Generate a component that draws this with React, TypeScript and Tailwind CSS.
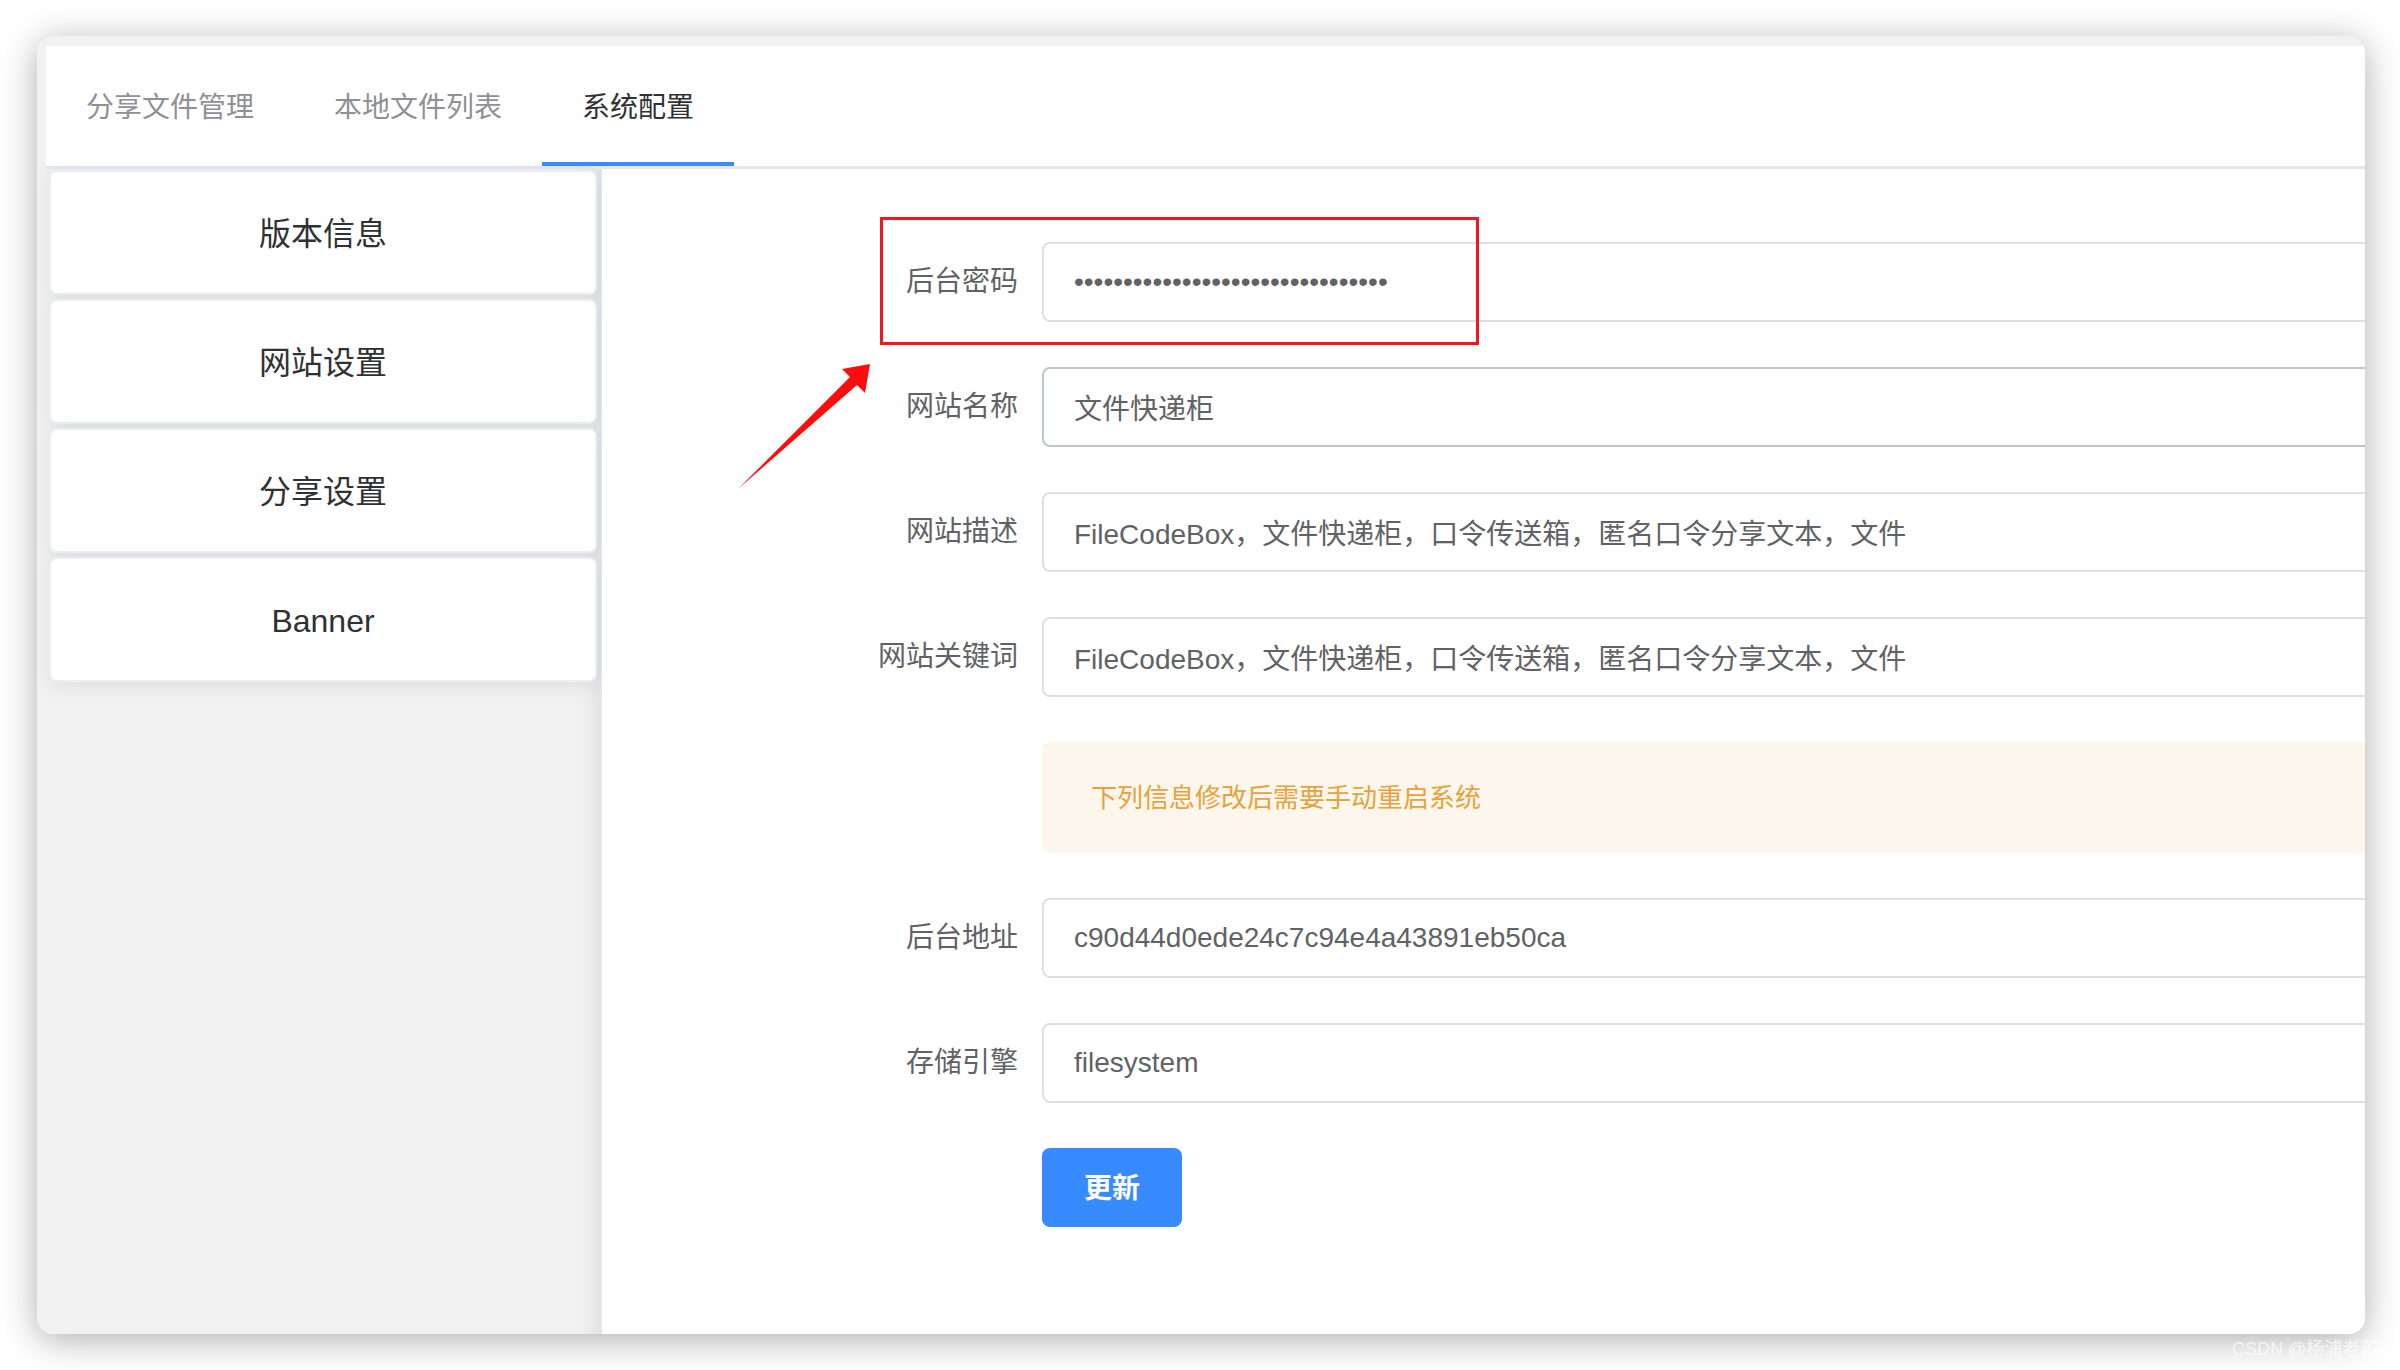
import React from 'react';

const tabs = ['分享文件管理', '本地文件列表', '系统配置'];
const menu = ['版本信息', '网站设置', '分享设置', 'Banner'];

const fields = [
  { label: '后台密码', value: '••••••••••••••••••••••••••••••••' },
  { label: '网站名称', value: '文件快递柜', hover: true },
  { label: '网站描述', value: 'FileCodeBox，文件快递柜，口令传送箱，匿名口令分享文本，文件' },
  { label: '网站关键词', value: 'FileCodeBox，文件快递柜，口令传送箱，匿名口令分享文本，文件' },
];

const restartFields = [
  { label: '后台地址', value: 'c90d44d0ede24c7c94e4a43891eb50ca' },
  { label: '存储引擎', value: 'filesystem' },
];

const Field = ({ label, value, hover }: { label: string; value: string; hover?: boolean }) => (
  <div className="flex items-center h-[80px]">
    <label className="w-[188px] shrink-0 pr-[24px] text-right text-[28px] text-[#606266]">{label}</label>
    <input
      readOnly
      value={value}
      className={`w-[1500px] shrink-0 h-[80px] rounded-[8px] border-2 bg-white px-[30px] text-[28px] text-[#606266] outline-none ${
        hover ? 'border-[#c0c4cc]' : 'border-[#dcdfe6]'
      }`}
    />
  </div>
);

export default function App() {
  return (
    <div className="relative w-[2400px] h-[1370px] overflow-hidden bg-white pl-[37px] pt-[36px] font-['Liberation_Sans','Noto_Sans_CJK_SC',sans-serif]">
      <div className="flex flex-col w-[2328px] h-[1298px] overflow-hidden rounded-[16px] bg-[#f1f1f1] pl-[9px] pt-[10px] shadow-[0_6px_36px_rgba(0,0,0,0.32)]">
        {/* tabs */}
        <div className="flex h-[123px] shrink-0 bg-white border-b-[3px] border-[#e4e7ed]">
          {tabs.map((t, i) => (
            <div
              key={t}
              className={`flex items-center px-[40px] pt-[8px] text-[28px] border-b-4 ${
                i === 2 ? 'border-[#3a8cfd] text-[#303133]' : 'border-transparent text-[#8e9096]'
              }`}
            >
              {t}
            </div>
          ))}
        </div>

        <div className="flex flex-1 min-h-0">
          {/* side menu */}
          <div className="w-[556px] shrink-0 flex flex-col gap-[4px] bg-[#f1f1f1] pt-[1px] pl-[3px] pr-[3px] border-r-2 border-[#e2e5ef] shadow-[inset_-22px_0_20px_-18px_rgba(0,0,0,0.09)]">
            {menu.map((m) => (
              <div
                key={m}
                className="flex h-[125px] items-center justify-center rounded-[8px] border-2 border-[#ebeef5] bg-white pt-[3px] text-[32px] text-[#303133] shadow-[0_4px_20px_rgba(0,0,0,0.08)]"
              >
                {m}
              </div>
            ))}
          </div>

          {/* form */}
          <div className="flex-1 min-w-0 overflow-hidden bg-white pl-[252px] pt-[73px]">
            <div className="flex flex-col gap-[45px]">
              {fields.map((f) => (
                <Field key={f.label} {...f} />
              ))}
              <div className="ml-[188px] flex h-[111px] w-[1500px] shrink-0 items-center rounded-[8px] bg-[#fdf6ec] pl-[49px] pt-[2px] text-[26px] text-[#e6a23c]">
                下列信息修改后需要手动重启系统
              </div>
              {restartFields.map((f) => (
                <Field key={f.label} {...f} />
              ))}
              <div className="ml-[188px]">
                <button className="h-[79px] w-[140px] rounded-[8px] bg-[#388bfd] pt-[2px] text-[28px] font-semibold text-white">
                  更新
                </button>
              </div>
            </div>
          </div>
        </div>
      </div>

      {/* annotation */}
      <div className="absolute left-[880px] top-[217px] h-[128px] w-[599px] border-[3px] border-[#f5161b]" />
      <svg className="absolute left-0 top-0 pointer-events-none" width="2400" height="1370">
        <polygon points="738,489 850,377 842,369 870,364 865,393 857,385" fill="#fa0d0d" />
      </svg>

      <div className="absolute left-[2232px] top-[1340px] text-[18px] leading-none text-white/70">CSDN @杨浦老苏</div>
    </div>
  );
}
